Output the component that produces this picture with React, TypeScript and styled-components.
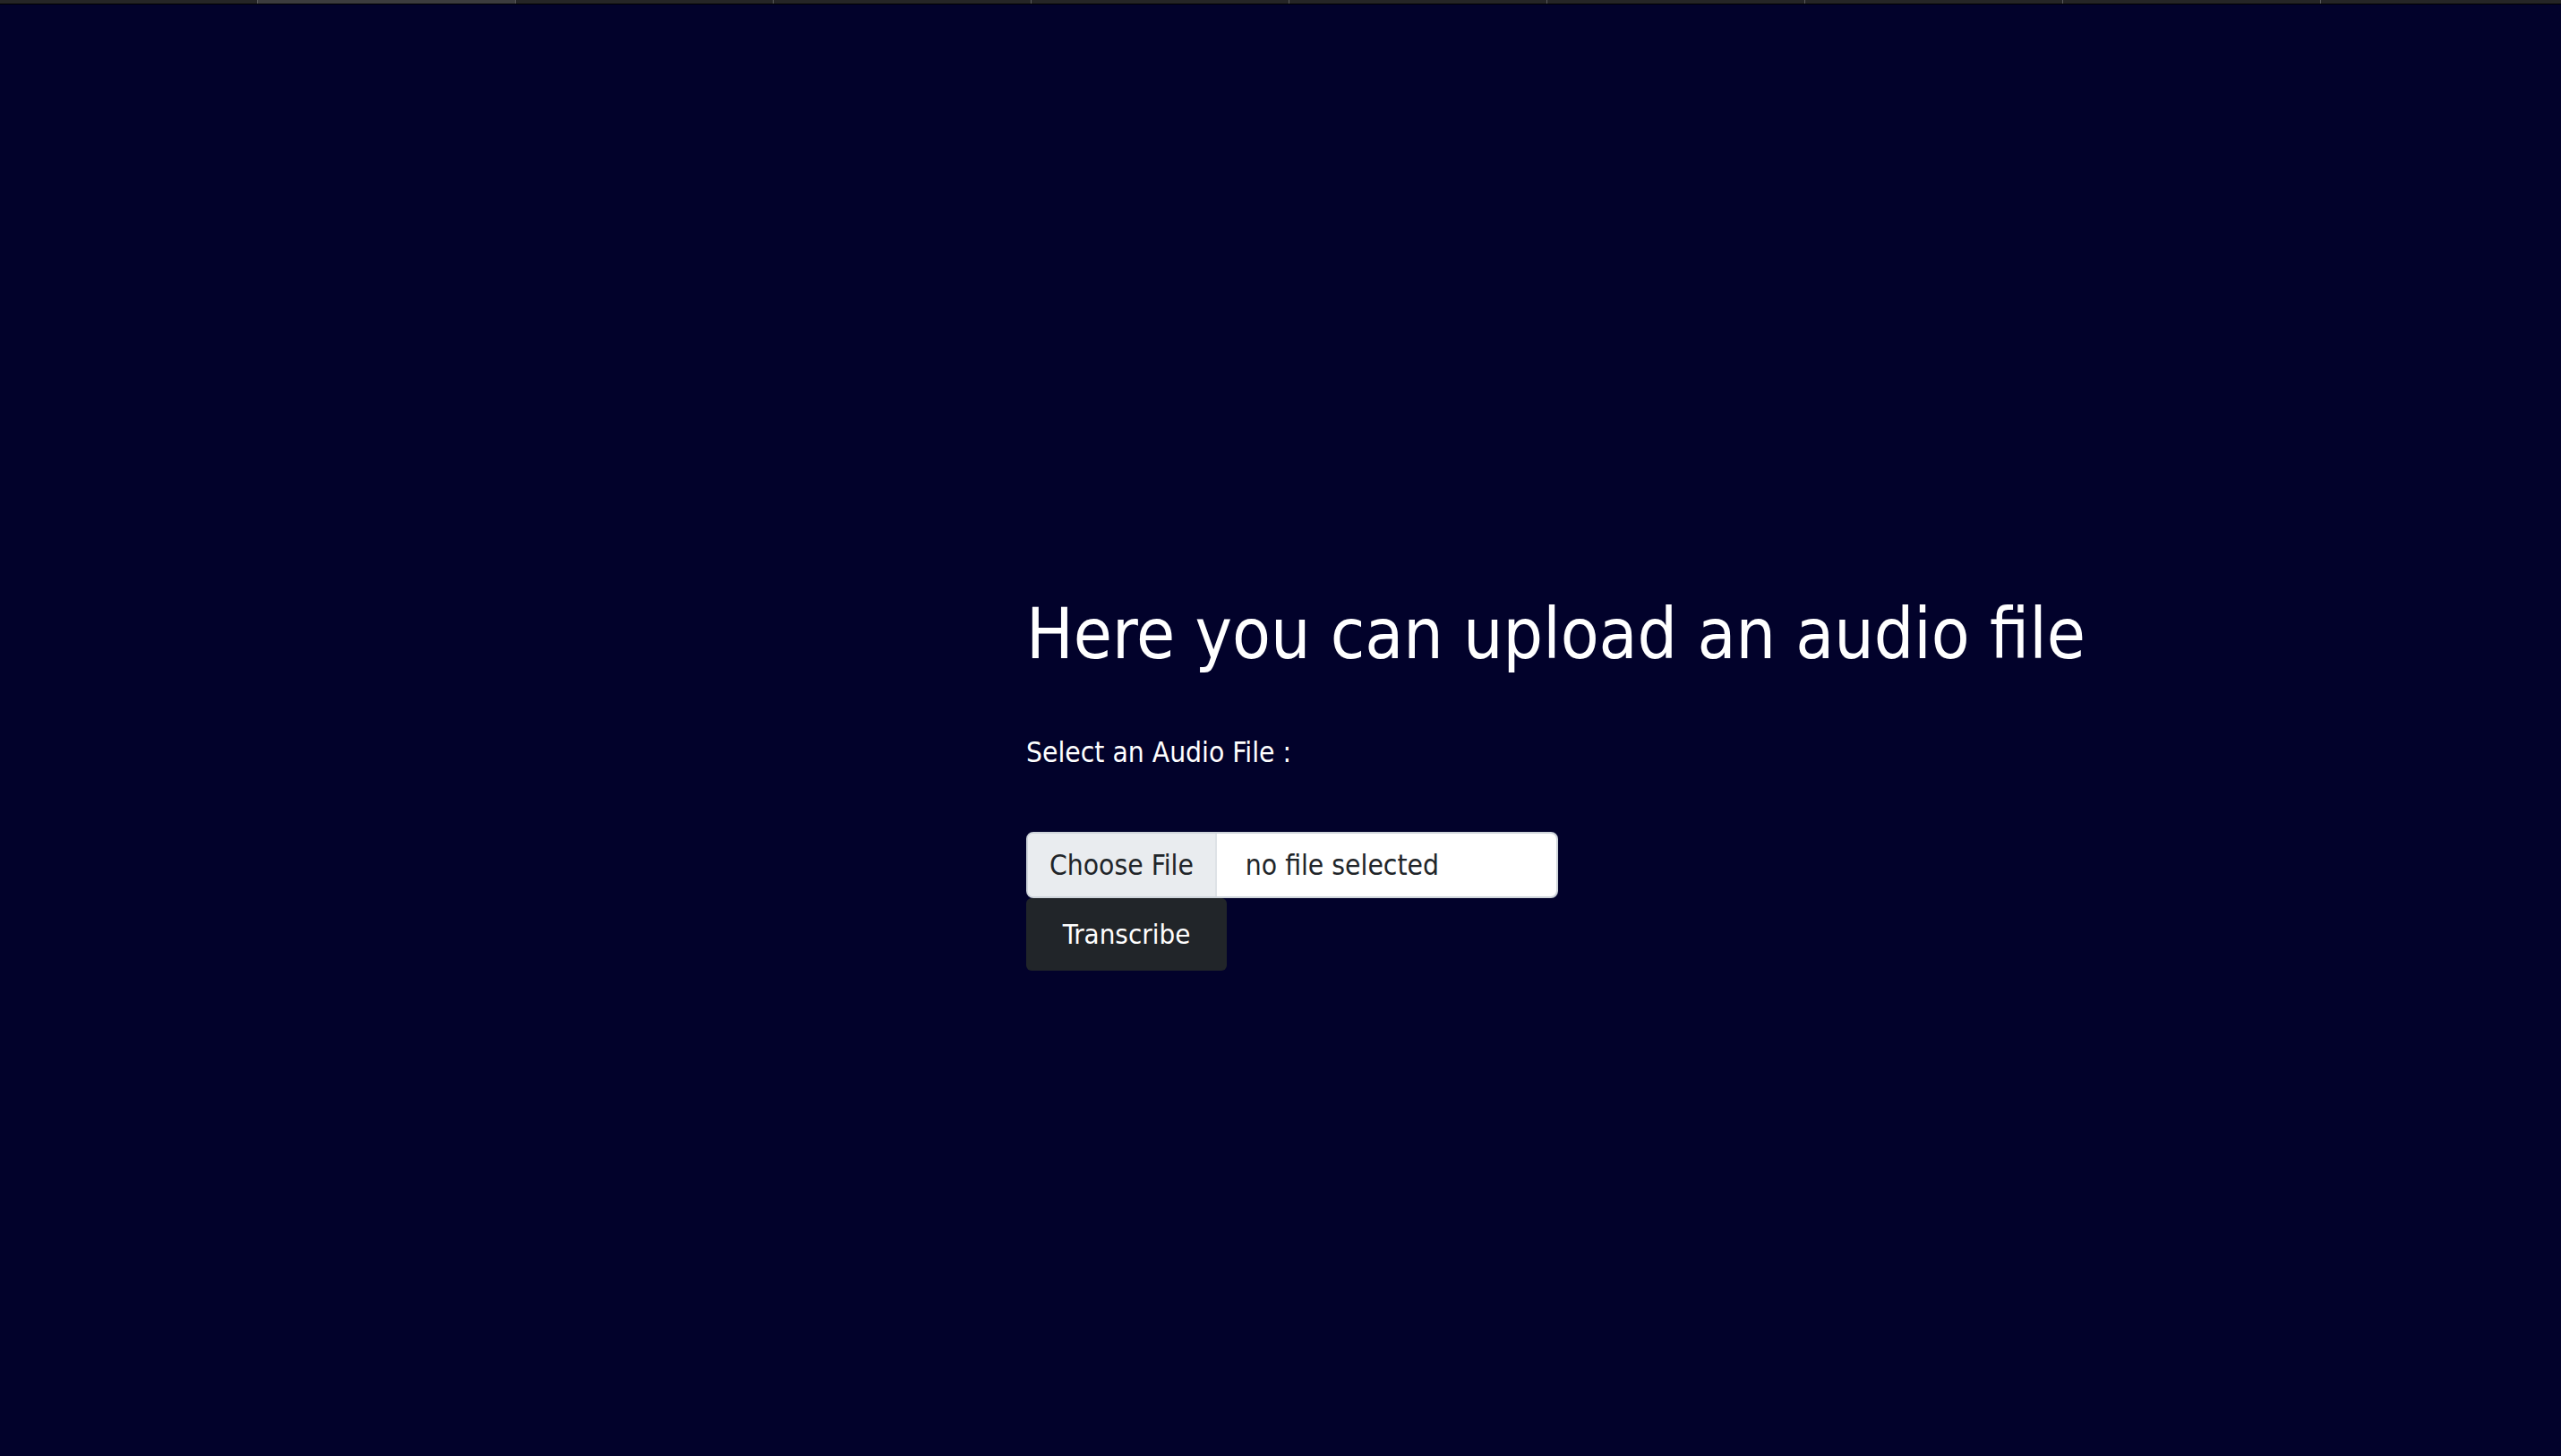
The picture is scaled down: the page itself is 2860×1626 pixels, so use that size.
import { useState } from "react";
import styled, { createGlobalStyle } from "styled-components";

const GlobalStyle = createGlobalStyle`
  html, body {
    margin: 0;
    padding: 0;
    background: #02022b;
  }
  body {
    font-family: "DejaVu Sans Condensed", "DejaVu Sans", sans-serif;
    color: #fff;
  }
`;

const Page = styled.div`
  min-height: 100vh;
  background: #02022b;
`;

const TabStrip = styled.div`
  display: flex;
  height: 4px;
  background: #252526;
  border-bottom: 1px solid #000;
`;

const Tab = styled.div<{ $active?: boolean }>`
  width: 288px;
  flex: none;
  background: ${(p) => (p.$active ? "#3c3c3e" : "#252526")};
  border-right: 1px solid #5a5a5c;
  box-sizing: border-box;
`;

const Main = styled.main`
  display: flex;
  flex-direction: column;
  align-items: flex-start;
  padding: 657px 0 0 1146px;
`;

const Title = styled.h1`
  margin: 0 0 66px;
  font-size: 78px;
  font-weight: 400;
  line-height: 1.2;
`;

const Label = styled.label`
  font-size: 31.5px;
  margin-bottom: 71px;
`;

const FileBox = styled.label`
  display: flex;
  width: 594px;
  height: 74px;
  box-sizing: border-box;
  border: 2px solid #ced4da;
  border-radius: 8px;
  background: #fff;
  overflow: hidden;
  cursor: pointer;
  input {
    display: none;
  }
`;

const ChooseButton = styled.span`
  display: flex;
  align-items: center;
  padding: 0 24px;
  background: #e9ecef;
  border-right: 2px solid #dee2e6;
  color: #212529;
  font-size: 31.5px;
`;

const FileName = styled.span`
  display: flex;
  align-items: center;
  padding: 0 32px;
  color: #212529;
  font-size: 31.5px;
`;

const Button = styled.button`
  width: 224px;
  height: 81px;
  border: none;
  border-radius: 6px;
  background: #212529;
  color: #fff;
  font-family: inherit;
  font-size: 31px;
  cursor: pointer;
`;

export default function App() {
  const [file, setFile] = useState<string | null>(null);

  return (
    <Page>
      <GlobalStyle />
      <TabStrip>
        {Array.from({ length: 10 }, (_, i) => (
          <Tab key={i} $active={i === 1} />
        ))}
      </TabStrip>
      <Main>
        <Title>Here you can upload an audio file</Title>
        <Label htmlFor="audio">Select an Audio File :</Label>
        <FileBox>
          <input
            id="audio"
            type="file"
            accept="audio/*"
            onChange={(e) => setFile(e.target.files?.[0]?.name ?? null)}
          />
          <ChooseButton>Choose File</ChooseButton>
          <FileName>{file ?? "no file selected"}</FileName>
        </FileBox>
        <Button>Transcribe</Button>
      </Main>
    </Page>
  );
}
